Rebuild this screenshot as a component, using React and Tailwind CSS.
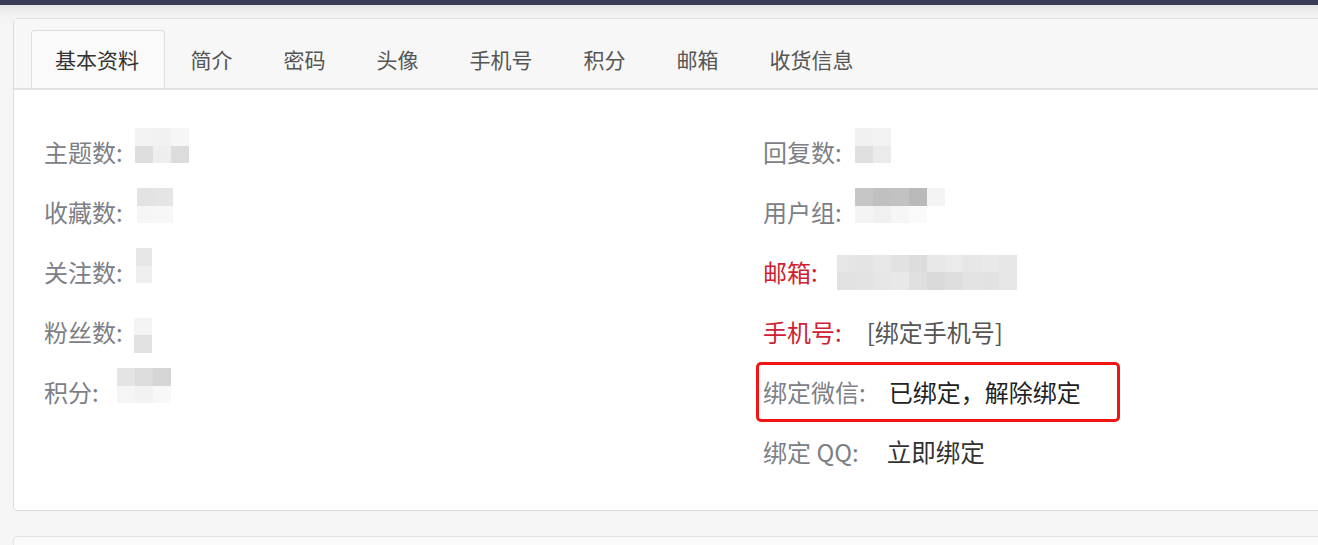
import React from "react";

const tabs = ["基本资料", "简介", "密码", "头像", "手机号", "积分", "邮箱", "收货信息"];

// pixelated (mosaic) placeholder for hidden values
function Mosaic({ rows, cell = 18, ml = 8, shift = 13 }) {
  return (
    <div className="flex flex-col" style={{ marginLeft: ml, marginBottom: shift }}>
      {rows.map((row, i) => (
        <div key={i} className="flex">
          {row.map((c, j) => (
            <div key={j} style={{ width: cell, height: 17.5, background: c }} />
          ))}
        </div>
      ))}
    </div>
  );
}

function Row({ label, red, children }) {
  return (
    <div className="relative flex h-[60px] items-center">
      <span className={red ? "text-[#cf2133]" : "text-[#7c8086]"}>{label}</span>
      {children}
    </div>
  );
}

export default function App() {
  return (
    <div
      className="min-h-screen w-full overflow-hidden bg-[#f5f5f5] leading-none"
      style={{ fontFamily: '"Microsoft YaHei", "Noto Sans CJK SC", "Noto Sans", sans-serif' }}
    >
      {/* top dark strip */}
      <div className="h-[5px] bg-[#383c54]" />
      <div className="h-[13px] bg-gradient-to-b from-[#e6e6e6] to-[#f5f5f5]" />

      <div className="pl-[13px]">
        {/* main panel */}
        <div className="w-[1400px] rounded-l-[4px] border border-[#dcdcdc] bg-white">
          {/* tab header */}
          <div className="flex h-[71px] items-end border-b-2 border-[#e2e2e2] bg-[#f7f7f7] pl-[17px] text-[21px]">
            {tabs.map((t, i) =>
              i === 0 ? (
                <div
                  key={t}
                  className="flex h-[58px] items-center rounded-t-[4px] border border-b-0 border-[#dedede] bg-[#fafafa] pl-[23px] pr-[25px] text-[#333]"
                >
                  {t}
                </div>
              ) : (
                <div key={t} className="flex h-[58px] items-center px-[25.5px] text-[#555]">
                  {t}
                </div>
              )
            )}
          </div>

          {/* body */}
          <div className="flex pb-[28px] pl-[30px] pt-[32px] text-[24px]">
            <div className="w-[719px]">
              <Row label="主题数:">
                <Mosaic
                  ml={12}
                  rows={[
                    ["#f3f3f3", "#f1f1f1", "#f6f6f6"],
                    ["#dedede", "#eeeeee", "#dcdcdc"],
                  ]}
                />
              </Row>
              <Row label="收藏数:">
                <Mosaic
                  ml={14}
                  rows={[
                    ["#e3e3e3", "#e5e5e5"],
                    ["#f6f6f6", "#f7f7f7"],
                  ]}
                />
              </Row>
              <Row label="关注数:">
                <Mosaic ml={13} cell={16} rows={[["#e6e6e6"], ["#efefef"]]} />
              </Row>
              <Row label="粉丝数:">
                <Mosaic ml={11} cell={18} shift={-6} rows={[["#f4f4f4"], ["#e2e2e2"]]} />
              </Row>
              <Row label="积分:">
                <Mosaic
                  ml={18}
                  rows={[
                    ["#e4e4e4", "#dcdcdc", "#d6d6d6"],
                    ["#f5f5f5", "#f2f2f2", "#f8f8f8"],
                  ]}
                />
              </Row>
            </div>

            <div>
              <Row label="回复数:">
                <Mosaic
                  ml={13}
                  rows={[
                    ["#f1f1f1", "#f3f3f3"],
                    ["#e0e0e0", "#ebebeb"],
                  ]}
                />
              </Row>
              <Row label="用户组:">
                <Mosaic
                  ml={13}
                  rows={[
                    ["#c6c6c6", "#c0c0c0", "#c2c2c2", "#b9b9b9", "#f4f4f4"],
                    ["#f4f4f4", "#f0f0f0", "#f6f6f6", "#fafafa", "#ffffff"],
                  ]}
                />
              </Row>
              <Row label="邮箱:" red>
                <Mosaic
                  ml={19}
                  shift={0}
                  rows={[
                    ["#e6e6e6", "#e4e4e4", "#e8e8e8", "#e2e2e2", "#dcdcdc", "#e8e8e8", "#ebebeb", "#e6e6e6", "#e9e9e9", "#e6e6e6"],
                    ["#e1e1e1", "#e3e3e3", "#e6e6e6", "#e8e8e8", "#e0e0e0", "#dadada", "#dedede", "#e3e3e3", "#e2e2e2", "#e7e7e7"],
                  ]}
                />
              </Row>
              <Row label="手机号:" red>
                <span className="ml-[25px] text-[#555]">[绑定手机号]</span>
              </Row>
              <Row label="绑定微信:">
                <span className="ml-[23px] text-[#222]">已绑定，解除绑定</span>
                <div className="absolute left-[-7px] top-0 h-[60px] w-[364px] rounded-[5px] border-[3px] border-[#f01414]" />
              </Row>
              <Row label="绑定 QQ:">
                <span className="ml-[28px] text-[24.5px] text-[#333]">立即绑定</span>
              </Row>
            </div>
          </div>
        </div>

        {/* next panel (cut off) */}
        <div className="mt-[25px] h-[20px] w-[1400px] rounded-l-[4px] border border-[#e2e2e2] bg-[#fafafa]" />
      </div>
    </div>
  );
}
